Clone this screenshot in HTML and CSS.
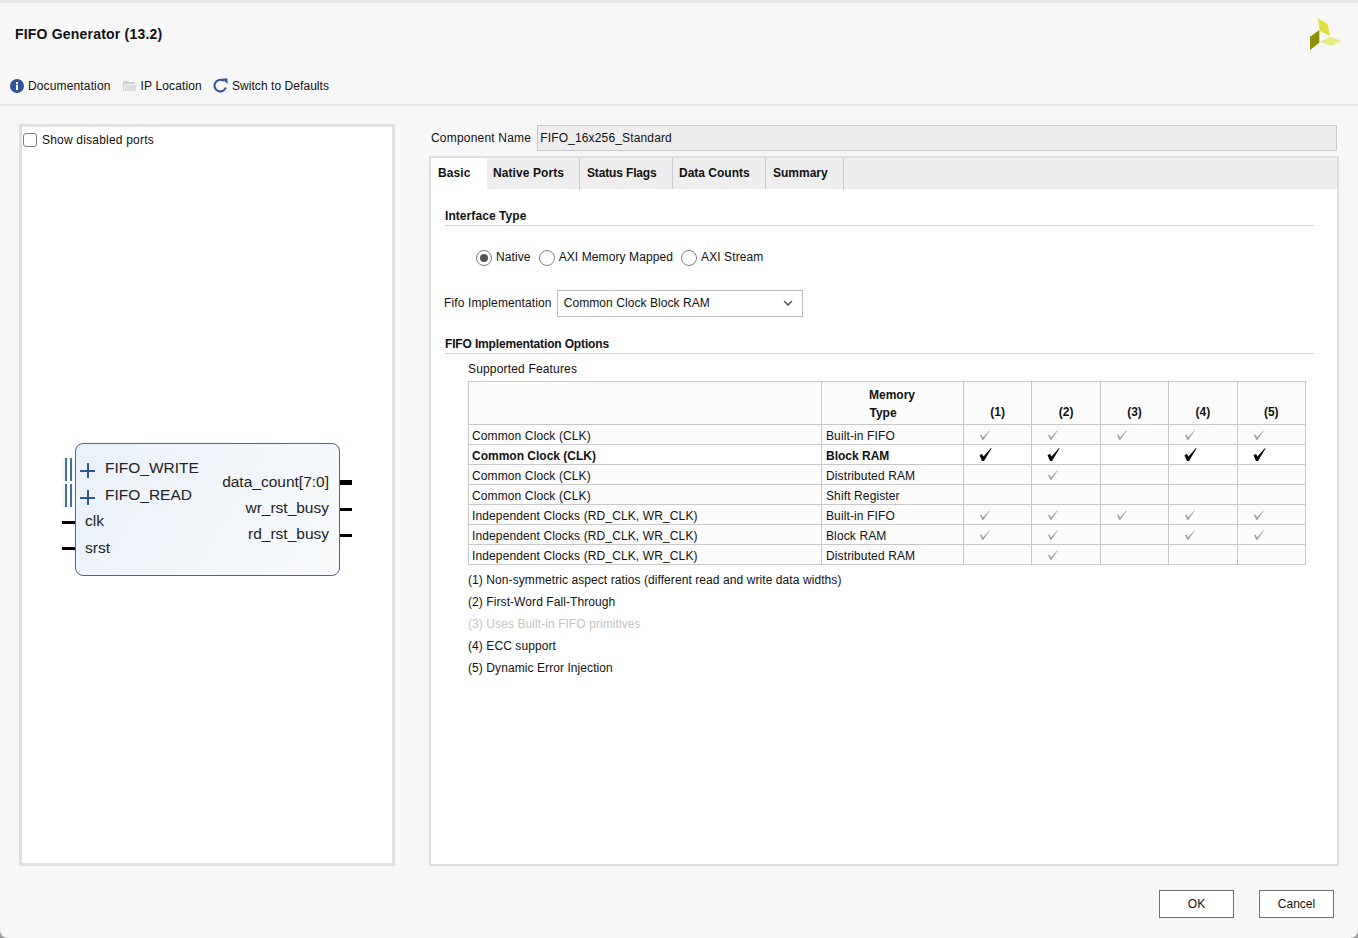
FILE: index.html
```html
<!DOCTYPE html>
<html lang="en">
<head>
<meta charset="utf-8">
<title>FIFO Generator (13.2)</title>
<link rel="stylesheet" href="styles.css">
</head>
<body>
<div class="window">
  <header class="header">
    <h1 class="title">FIFO Generator (13.2)</h1>
    <svg class="logo" width="33" height="33" viewBox="0 0 33 33">
      <polygon points="8.700,0.300 18.700,6.300 21,18 11,13" fill="#dfe03a"/>
      <polygon points="10.300,12 10.300,24.700 1,32 1,18.700" fill="#8e9200"/>
      <polygon points="21,18.700 32.700,23 22,28 11,23.700" fill="#e6ec80"/>
    </svg>
  </header>
  <nav class="toolbar">
    <a class="tool">
      <svg width="14" height="14" viewBox="0 0 14 14"><circle cx="7" cy="7" r="7" fill="#2f5597"/><rect x="6" y="5.800" width="2" height="5.200" fill="#fff"/><rect x="6" y="3" width="2" height="2" fill="#fff"/></svg>
      <span>Documentation</span>
    </a>
    <a class="tool">
      <svg width="14" height="12" viewBox="0 0 14 12"><path d="M0 1h5l1 1h6v2H3L1 6V11H0z" fill="#d0d0d0"/><path d="M1.500 11 3 4.800h11L12.500 11z" fill="#dcdcdc"/></svg>
      <span>IP Location</span>
    </a>
    <a class="tool tool-last">
      <svg width="15" height="15" viewBox="0 0 15 15"><path d="M12.800 9.500A5.800 5.800 0 1 1 10.800 3" fill="none" stroke="#33558f" stroke-width="2"/><polygon points="9,0.500 14.500,0.500 14.500,6" fill="#33558f"/></svg>
      <span>Switch to Defaults</span>
    </a>
  </nav>
  <main class="main">
    <section class="preview">
      <label class="check"><span class="checkbox"></span><span>Show disabled ports</span></label>
      <div class="symbol">
        <span class="bus bus-a"></span><span class="bus bus-b"></span>
        <span class="pin pin-l pin-c"></span><span class="pin pin-l pin-s"></span>
        <span class="pin pin-r pin-d"></span><span class="pin pin-r pin-w"></span><span class="pin pin-r pin-rd"></span>
        <span class="plus plus-a"></span><span class="plus plus-b"></span>
        <span class="port p-write">FIFO_WRITE</span>
        <span class="port p-read">FIFO_READ</span>
        <span class="port p-clk">clk</span>
        <span class="port p-srst">srst</span>
        <span class="port right p-count">data_count[7:0]</span>
        <span class="port right p-wr">wr_rst_busy</span>
        <span class="port right p-rd">rd_rst_busy</span>
      </div>
    </section>
    <section class="config">
      <div class="name-row">
        <span class="name-label">Component Name</span>
        <div class="name-field">FIFO_16x256_Standard</div>
      </div>
      <div class="tabset">
        <div class="tabs">
          <span class="tab active">Basic</span>
          <span class="tab t2">Native Ports</span>
          <span class="tab t3">Status Flags</span>
          <span class="tab t4">Data Counts</span>
          <span class="tab t5">Summary</span>
        </div>
        <div class="panel">
          <h2 class="group first">Interface Type</h2>
          <div class="radios">
            <span class="radio on"></span><span class="r-label">Native</span>
            <span class="radio"></span><span class="r-label">AXI Memory Mapped</span>
            <span class="radio"></span><span class="r-label">AXI Stream</span>
          </div>
          <div class="impl">
            <span class="impl-label">Fifo Implementation</span>
            <div class="select">
              <span>Common Clock Block RAM</span>
              <svg width="10" height="6" viewBox="0 0 10 6"><path d="M1 1l4 4 4-4" fill="none" stroke="#555" stroke-width="1.500"/></svg>
            </div>
          </div>
          <h2 class="group second">FIFO Implementation Options</h2>
          <div class="inner">
            <div class="supported">Supported Features</div>
            <table class="features">
              <colgroup><col class="c-clock"><col class="c-mem"><col class="c-n"><col class="c-n"><col class="c-n"><col class="c-n"><col class="c-n"></colgroup>
              <thead>
                <tr><th></th><th class="mem">Memory<br><span class="type">Type</span></th><th>(1)</th><th>(2)</th><th>(3)</th><th>(4)</th><th>(5)</th></tr>
              </thead>
              <tbody>
                <tr><td>Common Clock (CLK)</td><td>Built-in FIFO</td><td class="y"></td><td class="y"></td><td class="y"></td><td class="y"></td><td class="y"></td></tr>
                <tr class="sel"><td>Common Clock (CLK)</td><td>Block RAM</td><td class="y"></td><td class="y"></td><td></td><td class="y"></td><td class="y"></td></tr>
                <tr><td>Common Clock (CLK)</td><td>Distributed RAM</td><td></td><td class="y"></td><td></td><td></td><td></td></tr>
                <tr><td>Common Clock (CLK)</td><td>Shift Register</td><td></td><td></td><td></td><td></td><td></td></tr>
                <tr><td>Independent Clocks (RD_CLK, WR_CLK)</td><td>Built-in FIFO</td><td class="y"></td><td class="y"></td><td class="y"></td><td class="y"></td><td class="y"></td></tr>
                <tr><td>Independent Clocks (RD_CLK, WR_CLK)</td><td>Block RAM</td><td class="y"></td><td class="y"></td><td></td><td class="y"></td><td class="y"></td></tr>
                <tr><td>Independent Clocks (RD_CLK, WR_CLK)</td><td>Distributed RAM</td><td></td><td class="y"></td><td></td><td></td><td></td></tr>
              </tbody>
            </table>
            <ul class="notes">
              <li>(1) Non-symmetric aspect ratios (different read and write data widths)</li>
              <li>(2) First-Word Fall-Through</li>
              <li class="off">(3) Uses Built-in FIFO primitives</li>
              <li>(4) ECC support</li>
              <li>(5) Dynamic Error Injection</li>
            </ul>
          </div>
        </div>
      </div>
    </section>
  </main>
  <footer class="footer">
    <button class="btn">OK</button>
    <button class="btn">Cancel</button>
  </footer>
</div>
</body>
</html>
```
FILE: styles.css
```css
* { box-sizing: border-box; }
html, body { margin: 0; height: 100%; }
body { background: #a0a0a0; font: 12px "Liberation Sans", Arial, sans-serif; color: #111; overflow: hidden; }
.window { width: 1358px; height: 938px; background: #f7f7f7; border-top: 3px solid #e6e6e6; border-radius: 0 0 8px 8px; display: flex; flex-direction: column; }

.header { height: 67px; padding: 0 16px 0 15px; display: flex; justify-content: space-between; align-items: center; flex: none; }
.title { margin: 0; font-size: 14px; font-weight: bold; color: #111; position: relative; top: -3px; letter-spacing: .2px; }
.logo { margin-top: -5px; }

.toolbar { height: 36px; flex: none; padding: 0 0 3px 10px; display: flex; align-items: center; gap: 12px; border-bottom: 2px solid #e4e4e4; letter-spacing: .14px; }
.tool { display: flex; align-items: center; gap: 4px; color: #111; }
.tool-last { margin-left: -1px; letter-spacing: .06px; }

.main { flex: none; height: 762px; padding: 18px 19px 0; display: flex; gap: 34px; }
.preview { width: 376px; height: 742px; background: #fff; border: 3px solid #e0e0e0; position: relative; }
.check { position: absolute; left: 1px; top: 6px; display: flex; align-items: center; gap: 5px; color: #111; letter-spacing: .2px; }
.checkbox { width: 14px; height: 14px; border: 1px solid #7f7f7f; border-radius: 3px; background: #fff; }

.symbol { position: absolute; left: 53px; top: 316px; width: 265px; height: 133px; background: linear-gradient(120deg, #eaf1f9, #f8fafc); border: 1px solid #44699b; border-radius: 8px; }
.port { position: absolute; font-size: 15.500px; line-height: 18px; color: #222; white-space: nowrap; }
.port.right { right: 10px; }
.p-write { left: 29px; top: 15px; }
.p-read { left: 29px; top: 42px; }
.p-clk { left: 9px; top: 68px; }
.p-srst { left: 9px; top: 95px; }
.p-count { top: 29px; }
.p-wr { top: 55px; }
.p-rd { top: 81px; }
.pin { position: absolute; background: #000; }
.pin-l { left: -14px; width: 13px; height: 3px; }
.pin-r { right: -13px; width: 12px; height: 3px; }
.pin-c { top: 77px; }
.pin-s { top: 103px; }
.pin-d { top: 36px; height: 5px; }
.pin-w { top: 64px; }
.pin-rd { top: 90px; }
.bus { position: absolute; left: -14px; width: 11px; height: 23px; background: linear-gradient(90deg, #f3f6fa 3px, #3d6ea8 3px 5px, #ffffff 5px 8px, #3d6ea8 8px 10px, #f3f6fa 10px); }
.bus-a { top: 14px; }
.bus-b { top: 40px; }
.plus { position: absolute; left: 4px; width: 15px; height: 15px; background: linear-gradient(#2f5890, #2f5890) center / 15px 2px no-repeat, linear-gradient(#2f5890, #2f5890) center / 2px 15px no-repeat; }
.plus-a { top: 19px; }
.plus-b { top: 46px; }

.config { width: 910px; padding-top: 1px; }
.name-row { display: flex; align-items: center; height: 26px; padding-left: 2px; gap: 6px; color: #111; }
.name-label { letter-spacing: .2px; }
.name-field { flex: 1; height: 26px; margin-right: 2px; background: #eeeeee; border: 1px solid #c8c8c8; padding: 0 2px; line-height: 24px; letter-spacing: .15px; }
.tabset { margin-top: 5px; height: 710px; border: 2px solid #dedede; background: #fff; }
.tabs { height: 31px; display: flex; background: #eeeeee; font-weight: bold; }
.tab { display: flex; align-items: center; height: 100%; padding-bottom: 2px; border-right: 1px solid #c9c9c9; color: #111; }
.tab.active { width: 56px; padding-left: 7px; background: #fff; border-right: 0; letter-spacing: .1px; }
.t2 { width: 93px; padding-left: 6px; letter-spacing: .08px; }
.t3 { width: 93px; padding-left: 7px; letter-spacing: -.15px; }
.t4 { width: 93px; padding-left: 6px; }
.t5 { width: 78px; padding-left: 7px; }

.panel { padding: 0 23px 0 14px; }
.group { margin: 0; font-size: 12px; font-weight: bold; border-bottom: 1px solid #d4d4d4; color: #111; line-height: 16px; height: 18px; }
.group.first { margin-top: 19px; letter-spacing: .07px; }
.radios { margin: 23px 0 0 31px; height: 18px; display: flex; align-items: center; letter-spacing: .1px; }
.radio { width: 16px; height: 16px; border: 1px solid #808080; border-radius: 50%; background: #fff; margin-right: 4px; display: flex; align-items: center; justify-content: center; }
.radio.on::after { content: ""; width: 8px; height: 8px; background: #555; border-radius: 50%; }
.r-label { margin-right: 8px; padding-bottom: 2px; }
.impl { margin: 23px 0 0 -1px; display: flex; align-items: center; gap: 5px; }
.impl-label { letter-spacing: .12px; padding-bottom: 2px; }
.select { width: 246px; height: 27px; border: 1px solid #bcbcbc; background: #fff; padding: 0 9px 2px 6px; display: flex; align-items: center; justify-content: space-between; letter-spacing: .07px; }
.group.second { margin-top: 19px; letter-spacing: -.15px; }
.inner { padding-left: 23px; }
.supported { margin-top: 8px; line-height: 15px; letter-spacing: .17px; }
.features { margin-top: 4px; width: 837px; border-collapse: collapse; table-layout: fixed; background: #fcfcfc; letter-spacing: .12px; }
.c-clock { width: 353px; } .c-mem { width: 142px; } .c-n { width: 68.400px; }
.features th, .features td { border: 1px solid #c8c8c8; padding: 2px 3px 0; height: 20px; line-height: 16px; text-align: left; color: #111; }
.features th { height: 43px; text-align: center; vertical-align: bottom; padding: 0 3px 3px; line-height: 18px; font-weight: bold; letter-spacing: 0; }
.features th.mem { padding: 0 4px 2px 3px; }
.features td + td { padding-left: 4px; }
.type { position: relative; left: -9px; }
.sel td { font-weight: bold; background: #fff; letter-spacing: 0; }
.y { background: no-repeat 15px 4px url("data:image/svg+xml,%3Csvg xmlns='http://www.w3.org/2000/svg' width='13' height='13'%3E%3Cpolygon points='1,6 2.500,5.500 4,8.500 10.700,1 11,1.300 4.300,11 3.300,11' fill='%23a0a0a0'/%3E%3C/svg%3E"); }
.sel .y { background: #fff no-repeat 15px 3px url("data:image/svg+xml,%3Csvg xmlns='http://www.w3.org/2000/svg' width='13' height='13'%3E%3Cpolygon points='0.500,7 3,6 4.500,8.500 12,0 12.500,0.500 5,13 3,13' fill='%23000'/%3E%3C/svg%3E"); }
.notes { list-style: none; margin: 4px 0 0; padding: 0; letter-spacing: .08px; }
.notes li { height: 22px; line-height: 22px; color: #111; }
.notes li.off { color: #c4c4c4; }

.footer { flex: 1; display: flex; justify-content: flex-end; gap: 25px; padding: 22px 24px 0 0; }
.btn { width: 75px; height: 28px; background: #fff; border: 1px solid #707070; font: 12px "Liberation Sans", Arial, sans-serif; color: #111; padding: 0; }
```
